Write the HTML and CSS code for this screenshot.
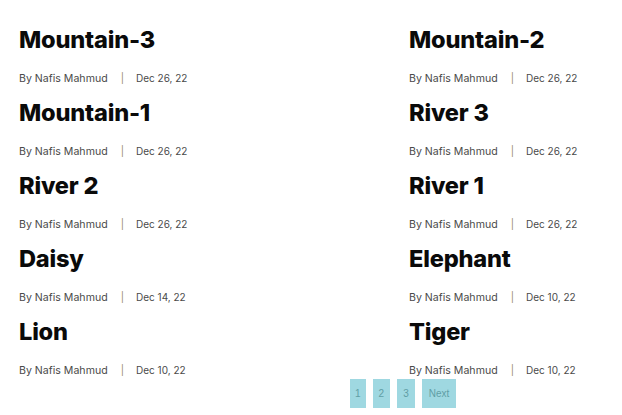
FILE: index.html
```html
<!DOCTYPE html>
<html>
<head>
<meta charset="utf-8">
<link rel="stylesheet" href="styles.css">
</head>
<body>
<div class="posts">
  <div class="post"><h2 class="title">Mountain-3</h2><div class="meta"><span class="author">By Nafis Mahmud</span><span class="sep">|</span><span class="date">Dec 26, 22</span></div></div>
  <div class="post"><h2 class="title">Mountain-2</h2><div class="meta"><span class="author">By Nafis Mahmud</span><span class="sep">|</span><span class="date">Dec 26, 22</span></div></div>
  <div class="post"><h2 class="title">Mountain-1</h2><div class="meta"><span class="author">By Nafis Mahmud</span><span class="sep">|</span><span class="date">Dec 26, 22</span></div></div>
  <div class="post"><h2 class="title">River 3</h2><div class="meta"><span class="author">By Nafis Mahmud</span><span class="sep">|</span><span class="date">Dec 26, 22</span></div></div>
  <div class="post"><h2 class="title">River 2</h2><div class="meta"><span class="author">By Nafis Mahmud</span><span class="sep">|</span><span class="date">Dec 26, 22</span></div></div>
  <div class="post"><h2 class="title">River 1</h2><div class="meta"><span class="author">By Nafis Mahmud</span><span class="sep">|</span><span class="date">Dec 26, 22</span></div></div>
  <div class="post"><h2 class="title">Daisy</h2><div class="meta"><span class="author">By Nafis Mahmud</span><span class="sep">|</span><span class="date">Dec 14, 22</span></div></div>
  <div class="post"><h2 class="title">Elephant</h2><div class="meta"><span class="author">By Nafis Mahmud</span><span class="sep">|</span><span class="date">Dec 10, 22</span></div></div>
  <div class="post"><h2 class="title">Lion</h2><div class="meta"><span class="author">By Nafis Mahmud</span><span class="sep">|</span><span class="date">Dec 10, 22</span></div></div>
  <div class="post"><h2 class="title">Tiger</h2><div class="meta"><span class="author">By Nafis Mahmud</span><span class="sep">|</span><span class="date">Dec 10, 22</span></div></div>
</div>
<nav class="pager">
  <a class="page">1</a>
  <a class="page">2</a>
  <a class="page">3</a>
  <a class="page next">Next</a>
</nav>
</body>
</html>
```
FILE: styles.css
```css
* { box-sizing: border-box; }
body {
  margin: 0;
  background: #fff;
  font-family: Inter, "Noto Sans", sans-serif;
  color: #111;
}
.posts {
  display: grid;
  grid-template-columns: 390px 1fr;
  padding: 25px 0 0 19px;
}
.post {
  height: 73px;
}
.title {
  margin: 0;
  font-size: 23.6px;
  font-weight: 800;
  line-height: 30px;
  letter-spacing: -0.2px;
  color: #0a0a0a;
}
.meta {
  margin-top: 16px;
  display: flex;
  align-items: baseline;
  font-size: 10px;
  line-height: 14px;
  color: #4a4a4a;
}
.author {
  font-size: 10.6px;
}
.sep {
  margin: 0 12px 0 13px;
  color: #9a8a6a;
}
.pager {
  display: flex;
  gap: 7px;
  padding-left: 350px;
  margin-top: -11px;
}
.page {
  display: flex;
  align-items: center;
  justify-content: center;
  height: 29px;
  min-width: 15px;
  padding: 0 6px;
  background: #9fd8e1;
  color: #5f9ea5;
  font-size: 10px;
  font-family: "Liberation Sans", sans-serif;
}
.page:first-child {
  padding: 0 5px;
}
.page.next {
  padding: 0 7px;
}
```
